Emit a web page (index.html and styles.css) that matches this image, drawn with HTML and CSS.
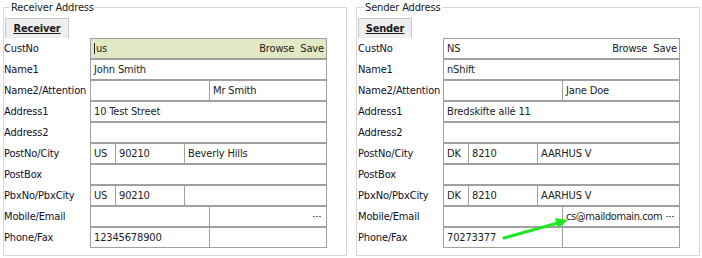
FILE: index.html
```html
<!DOCTYPE html>
<html>
<head>
<meta charset="utf-8">
<link rel="stylesheet" href="styles.css">
</head>
<body>
<div class="page">
  <fieldset class="panel panel-left">
    <legend>Receiver Address</legend>
    <div class="tab"><span>Receiver</span></div>
    <div class="form">
      <div class="row"><div class="lbl">CustNo</div><div class="fields"><div class="f grow cust hl"><span class="val"><span class="caret"></span>us</span><span class="acts">Browse&nbsp; Save</span></div></div></div>
      <div class="row"><div class="lbl">Name1</div><div class="fields"><div class="f grow">John Smith</div></div></div>
      <div class="row"><div class="lbl">Name2/Attention</div><div class="fields"><div class="f half"></div><div class="f grow">Mr Smith</div></div></div>
      <div class="row"><div class="lbl">Address1</div><div class="fields"><div class="f grow">10 Test Street</div></div></div>
      <div class="row"><div class="lbl">Address2</div><div class="fields"><div class="f grow"></div></div></div>
      <div class="row"><div class="lbl">PostNo/City</div><div class="fields"><div class="f cc">US</div><div class="f zip">90210</div><div class="f grow">Beverly Hills</div></div></div>
      <div class="row"><div class="lbl">PostBox</div><div class="fields"><div class="f grow"></div></div></div>
      <div class="row"><div class="lbl">PbxNo/PbxCity</div><div class="fields"><div class="f cc">US</div><div class="f zip">90210</div><div class="f grow"></div></div></div>
      <div class="row"><div class="lbl">Mobile/Email</div><div class="fields"><div class="f half"></div><div class="f grow mail"><span class="val"></span><span class="dots"><i></i><i></i><i></i></span></div></div></div>
      <div class="row"><div class="lbl">Phone/Fax</div><div class="fields"><div class="f half">12345678900</div><div class="f grow"></div></div></div>
    </div>
  </fieldset>
  <fieldset class="panel panel-right">
    <legend>Sender Address</legend>
    <div class="tab"><span>Sender</span></div>
    <div class="form">
      <div class="row"><div class="lbl">CustNo</div><div class="fields"><div class="f grow cust"><span class="val">NS</span><span class="acts">Browse&nbsp; Save</span></div></div></div>
      <div class="row"><div class="lbl">Name1</div><div class="fields"><div class="f grow">nShift</div></div></div>
      <div class="row"><div class="lbl">Name2/Attention</div><div class="fields"><div class="f half"></div><div class="f grow">Jane Doe</div></div></div>
      <div class="row"><div class="lbl">Address1</div><div class="fields"><div class="f grow">Bredskifte allé 11</div></div></div>
      <div class="row"><div class="lbl">Address2</div><div class="fields"><div class="f grow"></div></div></div>
      <div class="row"><div class="lbl">PostNo/City</div><div class="fields"><div class="f cc">DK</div><div class="f zip">8210</div><div class="f grow">AARHUS V</div></div></div>
      <div class="row"><div class="lbl">PostBox</div><div class="fields"><div class="f grow"></div></div></div>
      <div class="row"><div class="lbl">PbxNo/PbxCity</div><div class="fields"><div class="f cc">DK</div><div class="f zip">8210</div><div class="f grow">AARHUS V</div></div></div>
      <div class="row"><div class="lbl">Mobile/Email</div><div class="fields"><div class="f half"></div><div class="f grow mail"><span class="val email">cs@maildomain.com</span><span class="dots"><i></i><i></i><i></i></span></div></div></div>
      <div class="row"><div class="lbl">Phone/Fax</div><div class="fields"><div class="f half">70273377</div><div class="f grow"></div></div></div>
    </div>
    <svg class="arrow" width="80" height="30" viewBox="0 0 80 30">
      <line x1="2" y1="27" x2="56" y2="12" stroke="#22e622" stroke-width="3" stroke-linecap="round"/>
      <polygon points="66,9 55.8,17.4 53,7" fill="#22e622"/>
    </svg>
  </fieldset>
</div>
</body>
</html>
```

FILE: styles.css
```css
html, body {
  margin: 0;
  padding: 0;
  background: #ffffff;
}
body {
  font-family: "DejaVu Sans Condensed", "DejaVu Sans", sans-serif;
  font-stretch: condensed;
  font-size: 11px;
  letter-spacing: -0.15px;
  color: #000;
}
.page {
  display: flex;
  gap: 9px;
  padding: 1px 2px 0 3px;
}
.panel {
  position: relative;
  margin: 0;
  width: 344px;
  height: 255px;
  box-sizing: border-box;
  border: 1px solid #d9d9d9;
  padding: 3px 18px 0 0;
}
.panel-right { padding-left: 1px; }
.panel legend {
  padding: 0 1px;
  margin-left: 6px;
  color: #1a1a1a;
  line-height: 13px;
}
.tab {
  margin-top: 1px;
  margin-left: 1px;
  width: 64px;
  height: 20px;
  box-sizing: border-box;
  background: #efefef;
  border: 1px solid #c8c8c8;
  border-bottom: none;
  display: flex;
  align-items: center;
  justify-content: center;
}
.panel-right .tab { width: 54px; margin-left: 0; }
.tab span {
  font-weight: bold;
  text-decoration: underline;
  color: #1a1a1a;
}
.form {
  display: flex;
  flex-direction: column;
}
.row {
  display: flex;
  height: 21px;
}
.lbl {
  width: 86px;
  display: flex;
  align-items: center;
  color: #0f0f2a;
  white-space: nowrap;
}
.panel-right .lbl { width: 85px; }
.fields {
  width: 237px;
  display: flex;
  border: 1px solid #a0a0a0;
  box-sizing: border-box;
}
.f {
  box-sizing: border-box;
  display: flex;
  align-items: center;
  padding: 0 3px;
  color: #222;
  white-space: nowrap;
  overflow: hidden;
}
.f + .f { border-left: 1px solid #a0a0a0; }
.grow { flex: 1; }
.half { width: 118px; }
.cc { width: 24px; }
.zip { width: 69px; }
.hl { background: #e3e8c4; }
.cust, .mail { justify-content: space-between; padding-right: 2px; }
.email { letter-spacing: -0.4px; }
.acts { color: #222; }
.caret {
  display: inline-block;
  width: 1px;
  height: 11px;
  background: #222;
  vertical-align: -2px;
  margin-right: 1px;
}
.dots {
  display: flex;
  gap: 1px;
  padding-right: 3px;
  align-items: center;
}
.dots i {
  display: block;
  width: 2px;
  height: 1px;
  background: #6a6a6a;
}
.arrow {
  position: absolute;
  left: 145px;
  top: 197px;
}
```
